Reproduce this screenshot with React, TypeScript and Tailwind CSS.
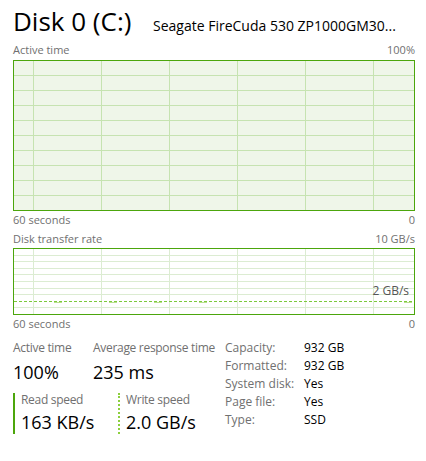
const graphLines1 = [1, 2, 3, 4, 5, 6, 7, 8, 9].map((i) => 15 * i - 1)
const graphLines2 = [6, 12, 19, 25, 32, 39, 45, 58]
const vLines = [19, 87, 155, 223, 291, 359]

function ActiveGraph() {
  return (
    <div className="h-[151px] border border-[#4ca60c] bg-[#eff6e9]">
      <svg width="400" height="149" shapeRendering="crispEdges" className="block">
        {graphLines1.map((y) => (
          <line key={y} x1="0" x2="400" y1={y + 0.5} y2={y + 0.5} stroke="#c6e3b1" />
        ))}
        {vLines.map((x) => (
          <line key={x} x1={x + 0.5} x2={x + 0.5} y1="0" y2="149" stroke="#c6e3b1" />
        ))}
      </svg>
    </div>
  )
}

function TransferGraph() {
  return (
    <div className="relative h-[67px] border border-[#4ca60c] bg-white">
      <svg width="400" height="65" shapeRendering="crispEdges" className="block">
        {graphLines2.map((y) => (
          <line key={y} x1="0" x2="400" y1={y + 0.5} y2={y + 0.5} stroke="#dcecd2" />
        ))}
        {vLines.map((x) => (
          <line key={x} x1={x + 0.5} x2={x + 0.5} y1="0" y2="65" stroke="#dcecd2" />
        ))}
        <line x1="0" x2="400" y1="52.5" y2="52.5" stroke="#7cc93a" strokeDasharray="3 2" />
        {[40, 95, 140, 185, 390].map((x) => (
          <line key={x} x1={x} x2={x + 8} y1="53.5" y2="53.5" stroke="#b9e08e" />
        ))}
      </svg>
      <span className="absolute right-[5px] top-[35px] text-[12px] leading-[14px] text-[#555]">2 GB/s</span>
    </div>
  )
}

function Row({ left, right }: { left: string; right: string }) {
  return (
    <div className="flex justify-between text-[11px] leading-[14px] text-[#707070]">
      <span>{left}</span>
      <span>{right}</span>
    </div>
  )
}

const info = [
  ['Capacity:', '932 GB'],
  ['Formatted:', '932 GB'],
  ['System disk:', 'Yes'],
  ['Page file:', 'Yes'],
  ['Type:', 'SSD'],
]

export default function App() {
  return (
    <div
      className="w-[426px] h-[461px] bg-white pl-[13px] pr-[11px] text-black overflow-hidden"
      style={{ fontFamily: '"Open Sans", "Noto Sans", sans-serif' }}
    >
      <div className="flex items-baseline mt-[3px] h-[36px] whitespace-nowrap">
        <span className="text-[26px] leading-[36px]">Disk 0 (C:)</span>
        <span className="ml-auto text-[14px] leading-[20px] w-[262px] overflow-hidden">
          Seagate FireCuda 530 ZP1000GM30...
        </span>
      </div>

      <div className="mt-[4px]">
        <Row left="Active time" right="100%" />
      </div>
      <div className="mt-[3px]">
        <ActiveGraph />
      </div>
      <div className="mt-[2px]">
        <Row left="60 seconds" right="0" />
      </div>

      <div className="mt-[5px]">
        <Row left="Disk transfer rate" right="10 GB/s" />
      </div>
      <div className="mt-[2px]">
        <TransferGraph />
      </div>
      <div className="mt-[2px]">
        <Row left="60 seconds" right="0" />
      </div>

      <div className="flex mt-[9px]">
        <div className="w-[212px]">
          <div className="flex">
            <div className="w-[80px]">
              <div className="text-[12px] tracking-[-0.3px] leading-[16px] text-[#707070]">Active time</div>
              <div className="mt-[4px] text-[18px] leading-[24px]">100%</div>
            </div>
            <div>
              <div className="text-[12px] tracking-[-0.3px] leading-[16px] text-[#707070]">Average response time</div>
              <div className="mt-[4px] text-[18px] leading-[24px]">235 ms</div>
            </div>
          </div>
          <div className="flex mt-[9px]">
            <div className="w-[105px] h-[41px] border-l-2 border-[#4ca60c] pl-[6px]">
              <div className="text-[12px] tracking-[-0.3px] leading-[14px] text-[#707070]">Read speed</div>
              <div className="mt-[3px] text-[18px] leading-[24px]">163 KB/s</div>
            </div>
            <div className="h-[41px] border-l-2 border-dotted border-[#8ccf3e] pl-[6px]">
              <div className="text-[12px] tracking-[-0.3px] leading-[14px] text-[#707070]">Write speed</div>
              <div className="mt-[3px] text-[18px] leading-[24px]">2.0 GB/s</div>
            </div>
          </div>
        </div>
        <div className="-mt-[1px]">
          {info.map(([k, v]) => (
            <div key={k} className="flex text-[12px] leading-[18px]">
              <span className="w-[79px] text-[#707070]">{k}</span>
              <span>{v}</span>
            </div>
          ))}
        </div>
      </div>
    </div>
  )
}
